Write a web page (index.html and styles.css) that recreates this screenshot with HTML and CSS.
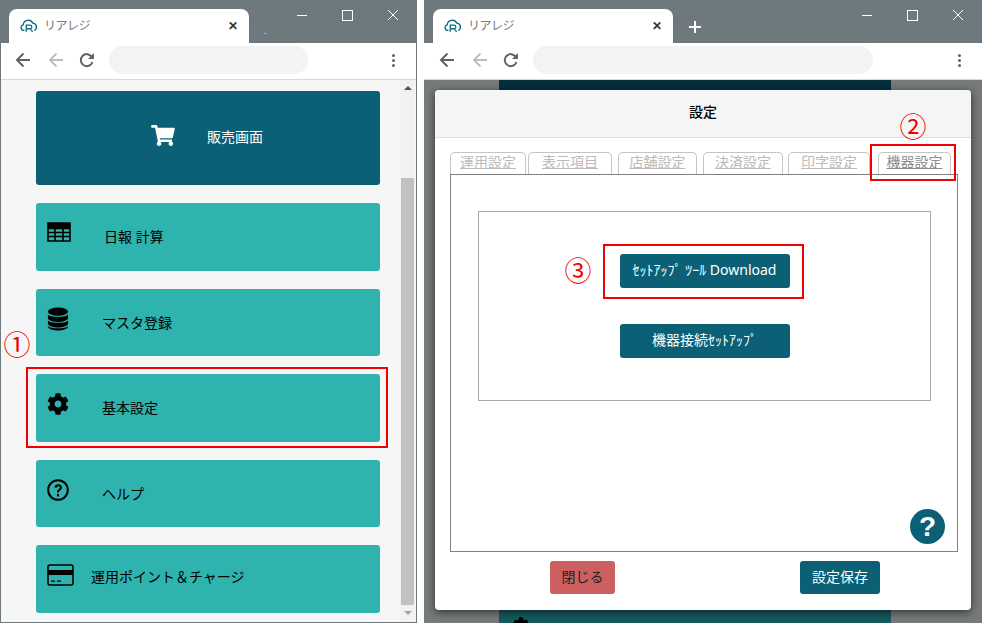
FILE: index.html
```html
<!DOCTYPE html>
<html lang="ja">
<head>
    <meta charset="UTF-8">
    <meta name="viewport" content="width=device-width, initial-scale=1.0">
    <title>リアレジ</title>
    <link rel="stylesheet" href="styles.css">
</head>
<body>
    <svg class="defs" width="0" height="0">
        <symbol id="logo" viewBox="0 0 20 16">
            <path d="M5 13.5H4.2A3.2 3.2 0 0 1 3.6 7.2 5.6 5.6 0 0 1 14.2 5.4 4.2 4.2 0 0 1 15.6 13.5" fill="none" stroke="#0b6f7f" stroke-width="1.5"/>
            <path d="M7 15V7.5h4a2.2 2.2 0 0 1 .6 4.3L14 15M7 11.6h4" fill="none" stroke="#0b6f7f" stroke-width="1.5"/>
        </symbol>
        <symbol id="back" viewBox="0 0 16 16">
            <path d="M15 8H2.5M8.5 1.5 2 8l6.500 6.500" fill="none" stroke="currentColor" stroke-width="2"/>
        </symbol>
        <symbol id="reload" viewBox="0 0 16 16">
            <path d="M13.500 10a6 6 0 1 1-.7-5.200" fill="none" stroke="currentColor" stroke-width="2"/>
            <path d="M15 1v6H9z" fill="currentColor"/>
        </symbol>
    </svg>

    <!-- 左のウィンドウ -->
    <div class="window window-left">
        <div class="titlebar">
            <div class="tab">
                <svg class="tab-logo"><use href="#logo"/></svg>
                <span class="tab-title">リアレジ</span>
                <span class="tab-close">✕</span>
            </div>
            <span class="tab-dot">.</span>
            <div class="win-controls">
                <span class="win-min"></span>
                <span class="win-max"></span>
                <svg class="win-close" viewBox="0 0 12 12"><path d="M1 1l10 10M11 1 1 11" stroke="#fff" fill="none"/></svg>
            </div>
        </div>
        <div class="toolbar">
            <svg class="nav-icon"><use href="#back"/></svg>
            <svg class="nav-icon nav-forward"><use href="#back"/></svg>
            <svg class="nav-icon nav-reload"><use href="#reload"/></svg>
            <div class="omnibox"></div>
            <div class="kebab"><i></i><i></i><i></i></div>
        </div>
        <div class="page">
            <div class="menu">
                <div class="menu-item menu-sales">
                    <svg class="icon-cart" viewBox="0 0 576 512"><path fill="#fff" d="M528.12 301.319l47.273-208C578.806 78.301 567.391 64 551.99 64H159.208l-9.166-44.81C147.758 8.021 137.93 0 126.529 0H24C10.745 0 0 10.745 0 24v16c0 13.255 10.745 24 24 24h69.883l70.248 343.435C147.325 417.1 136 435.222 136 456c0 30.928 25.072 56 56 56s56-25.072 56-56c0-15.674-6.447-29.835-16.824-40h209.647C430.447 426.165 424 440.326 424 456c0 30.928 25.072 56 56 56s56-25.072 56-56c0-22.172-12.888-41.332-31.579-50.405l5.517-24.276c3.413-15.018-8.002-29.319-23.403-29.319H218.117l-6.545-32h293.145c11.206 0 20.92-7.754 23.403-18.681z"/></svg>
                    <span class="menu-label">販売画面</span>
                </div>
                <div class="menu-item">
                    <svg class="menu-icon icon-table" viewBox="0 0 24 20"><path d="M1 1h22v18H1zM1 6.500h22M1 10.500h22M1 14.500h22M8 6.500V19M16 6.500V19" fill="none" stroke="#000" stroke-width="1.600"/><path d="M1 1h22v5H1z"/></svg>
                    <span class="menu-label label-report">日報 計算</span>
                </div>
                <div class="menu-item">
                    <svg class="menu-icon icon-db" viewBox="0 0 24 26"><ellipse cx="12" cy="5" rx="11" ry="4.500"/><path d="M1 8c2 3.500 20 3.500 22 0v4.500c-2 5-20 5-22 0zM1 14.500c2 3.500 20 3.500 22 0v4c-2 5-20 5-22 0zM1 20.500c2 3.500 20 3.500 22 0v1c-2 5.500-20 5.500-22 0z"/></svg>
                    <span class="menu-label">マスタ登録</span>
                </div>
                <div class="menu-item">
                    <svg class="menu-icon" viewBox="0 0 512 512"><path d="M487.4 315.7l-42.6-24.6c4.3-23.2 4.3-47 0-70.2l42.6-24.6c4.9-2.8 7.1-8.6 5.5-14-11.1-35.6-30-67.8-54.7-94.6-3.8-4.1-10-5.1-14.8-2.3L380.8 110c-17.9-15.4-38.5-27.3-60.8-35.1V25.8c0-5.6-3.9-10.5-9.4-11.7-36.7-8.2-74.3-7.8-109.2 0-5.5 1.2-9.4 6.1-9.4 11.7V75c-22.2 7.9-42.8 19.8-60.8 35.1L88.7 85.500c-4.9-2.8-11-1.9-14.8 2.3-24.7 26.7-43.6 58.9-54.7 94.6-1.7 5.4.6 11.2 5.500 14L67.3 221c-4.3 23.2-4.3 47 0 70.2l-42.6 24.6c-4.9 2.8-7.1 8.6-5.500 14 11.1 35.6 30 67.8 54.7 94.6 3.8 4.1 10 5.1 14.8 2.3l42.6-24.6c17.9 15.4 38.5 27.3 60.8 35.1v49.2c0 5.6 3.9 10.5 9.4 11.7 36.7 8.2 74.3 7.8 109.2 0 5.500-1.2 9.4-6.1 9.4-11.7v-49.2c22.2-7.9 42.8-19.8 60.8-35.1l42.6 24.6c4.9 2.8 11 1.9 14.8-2.3 24.7-26.7 43.6-58.9 54.7-94.6 1.500-5.500-.7-11.3-5.6-14.1zM256 336c-44.1 0-80-35.9-80-80s35.9-80 80-80 80 35.9 80 80-35.9 80-80 80z"/></svg>
                    <span class="menu-label">基本設定</span>
                </div>
                <div class="menu-item">
                    <svg class="menu-icon" viewBox="0 0 22 22"><circle cx="11" cy="11" r="9.800" fill="none" stroke="#000" stroke-width="2"/><path d="M7.500 8.500c0-4.500 7.500-4.500 7.500 0 0 2.800-3 2.600-3 5H10c0-3.400 2.700-3.200 2.700-5 0-1.800-3-1.800-3 .3zM10 15h2v2.500h-2z"/></svg>
                    <span class="menu-label">ヘルプ</span>
                </div>
                <div class="menu-item">
                    <svg class="menu-icon icon-card" viewBox="0 0 27 22"><rect x="1" y="1" width="25" height="20" rx="2" fill="none" stroke="#000" stroke-width="1.600"/><path d="M1 6h25v5H1zM4 16.500h4v1.300H4zM10 16.500h4v1.300h-4z"/></svg>
                    <span class="menu-label label-charge">運用ポイント＆チャージ</span>
                </div>
            </div>
            <div class="scrollbar">
                <span class="arrow-up"></span>
                <span class="scroll-thumb"></span>
                <span class="arrow-down"></span>
            </div>
        </div>
    </div>

    <!-- 右のウィンドウ -->
    <div class="window window-right">
        <div class="titlebar">
            <div class="tab">
                <svg class="tab-logo"><use href="#logo"/></svg>
                <span class="tab-title">リアレジ</span>
                <span class="tab-close">✕</span>
            </div>
            <svg class="tab-new" viewBox="0 0 12 12"><path d="M6 0v12M0 6h12" stroke="#fff" stroke-width="2"/></svg>
            <div class="win-controls">
                <span class="win-min"></span>
                <span class="win-max"></span>
                <svg class="win-close" viewBox="0 0 12 12"><path d="M1 1l10 10M11 1 1 11" stroke="#fff" fill="none"/></svg>
            </div>
        </div>
        <div class="toolbar">
            <svg class="nav-icon"><use href="#back"/></svg>
            <svg class="nav-icon nav-forward"><use href="#back"/></svg>
            <svg class="nav-icon nav-reload"><use href="#reload"/></svg>
            <div class="omnibox"></div>
            <div class="kebab"><i></i><i></i><i></i></div>
        </div>
        <div class="page page-dim">
            <div class="behind-top"></div>
            <div class="behind-bottom">
                <svg class="behind-gear" viewBox="0 0 512 512"><path d="M487.4 315.7l-42.6-24.6c4.3-23.2 4.3-47 0-70.2l42.6-24.6c4.9-2.8 7.1-8.6 5.500-14-11.1-35.6-30-67.8-54.7-94.6-3.8-4.1-10-5.1-14.8-2.3L380.8 110c-17.9-15.4-38.5-27.3-60.8-35.1V25.8c0-5.6-3.9-10.5-9.4-11.7-36.7-8.2-74.3-7.8-109.2 0-5.500 1.2-9.4 6.1-9.4 11.7V75c-22.2 7.9-42.8 19.8-60.8 35.1L88.7 85.500c-4.9-2.8-11-1.9-14.8 2.3-24.7 26.7-43.6 58.9-54.7 94.6-1.7 5.4.6 11.2 5.500 14L67.3 221c-4.3 23.2-4.3 47 0 70.2z"/></svg>
            </div>
            <div class="modal">
                <div class="modal-header">設定</div>
                <div class="modal-body">
                    <div class="tabs">
                        <a class="set-tab tab-a">運用設定</a>
                        <a class="set-tab tab-b">表示項目</a>
                        <a class="set-tab tab-c">店舗設定</a>
                        <a class="set-tab tab-d">決済設定</a>
                        <a class="set-tab tab-e">印字設定</a>
                        <a class="set-tab tab-f set-tab-active">機器設定</a>
                    </div>
                    <div class="panel">
                        <div class="device-box">
                            <button type="button" class="btn-dark btn-setup">ｾｯﾄｱｯﾌﾟ ﾂｰﾙ Download</button>
                            <button type="button" class="btn-dark btn-setup">機器接続ｾｯﾄｱｯﾌﾟ</button>
                        </div>
                        <span class="help-round">?</span>
                    </div>
                    <div class="modal-footer">
                        <button type="button" class="btn-close">閉じる</button>
                        <button type="button" class="btn-dark btn-save">設定保存</button>
                    </div>
                </div>
            </div>
        </div>
    </div>

    <!-- 説明用の赤枠と番号 -->
    <div class="mark mark-1"></div>
    <div class="mark mark-2"></div>
    <div class="mark mark-3"></div>
    <span class="num num-1">①</span>
    <span class="num num-2">②</span>
    <span class="num num-3">③</span>
</body>
</html>
```

FILE: styles.css
```css
body {
    margin: 0;
    width: 982px;
    height: 623px;
    display: flex;
    justify-content: space-between;
    position: relative;
    overflow: hidden;
    background-color: #FFFFFF;
    color: #000000;
    font-family: "Noto Sans", "Noto Sans CJK JP", sans-serif;
    font-size: 14px;
}
.defs {
    position: absolute;
}
.window {
    display: flex;
    flex-direction: column;
    box-sizing: border-box;
    height: 623px;
}
.window-left {
    width: 417px;
    border: 1px solid #6d797c;
    border-top: 0;
}
.window-right {
    width: 558px;
}

/* タイトルバー */
.titlebar {
    height: 43px;
    flex: none;
    display: flex;
    align-items: flex-end;
    background-color: #6d797c;
    color: #FFFFFF;
}
.tab {
    width: 240px;
    height: 34px;
    box-sizing: border-box;
    display: flex;
    align-items: center;
    padding: 0 9px 2px 11px;
    background-color: #FFFFFF;
    border-radius: 8px 8px 0 0;
}
.window-left .tab {
    margin-left: 8px;
}
.window-right .tab {
    margin-left: 9px;
}
.tab-logo {
    width: 18px;
    height: 15px;
    flex: none;
}
.tab-title {
    margin-left: 6px;
    flex: 1;
    font-size: 12px;
    letter-spacing: -0.5px;
    color: #777777;
}
.tab-close {
    width: 14px;
    color: #333333;
    font-size: 12px;
    font-weight: bold;
    text-align: center;
}
.tab-dot {
    margin: 0 0 8px 15px;
    font-size: 9px;
    line-height: 9px;
}
.tab-new {
    width: 12px;
    height: 12px;
    margin: 0 0 10px 16px;
}
.win-controls {
    margin-left: auto;
    align-self: flex-start;
    display: flex;
    align-items: center;
    height: 30px;
}
.win-min {
    width: 10px;
    height: 1px;
    background-color: #FFFFFF;
}
.win-max {
    width: 9px;
    height: 9px;
    margin-left: 35px;
    border: 1px solid #FFFFFF;
}
.win-close {
    width: 12px;
    height: 12px;
    margin: 0 17px 0 34px;
}
.window-right .win-close {
    margin-right: 18px;
}

/* ツールバー */
.toolbar {
    height: 37px;
    flex: none;
    box-sizing: border-box;
    display: flex;
    align-items: center;
    padding: 0 0 2px 14px;
    background-color: #FFFFFF;
    border-bottom: 1px solid #d6d8da;
}
.window-right .toolbar {
    padding-left: 15px;
}
.nav-icon {
    width: 16px;
    height: 16px;
    flex: none;
    color: #5f6368;
}
.nav-forward {
    margin-left: 17px;
    color: #bcbec1;
}
.nav-reload {
    margin-left: 15px;
}
.omnibox {
    width: 199px;
    height: 28px;
    margin-left: 14px;
    background-color: #f1f3f4;
    border-radius: 14px;
}
.window-right .omnibox {
    width: 340px;
    margin-left: 14px;
}
.window-right .nav-reload {
    margin-left: 15px;
}
.kebab {
    margin-left: 84px;
    display: flex;
    flex-direction: column;
    gap: 2px;
}
.window-right .kebab {
    margin-left: 85px;
}
.kebab i {
    width: 3px;
    height: 3px;
    border-radius: 50%;
    background-color: #5f6368;
}

/* 左のメニュー */
.page {
    flex: 1;
    display: flex;
    position: relative;
    background-color: #f6f6f6;
    overflow: hidden;
}
.menu {
    flex: 1;
    display: flex;
    flex-direction: column;
    gap: 18px;
    padding: 11px 20px 0 35px;
}
.menu-item {
    height: 68px;
    display: flex;
    align-items: center;
    padding-left: 66px;
    position: relative;
    background-color: #2eb3ae;
    border-radius: 3px;
}
.menu-item:nth-child(3), .menu-item:nth-child(5) {
    height: 67px;
}
.menu-sales {
    height: 94px;
    padding-left: 115px;
    background-color: #0b6075;
    color: #FFFFFF;
}
.menu-icon {
    position: absolute;
    left: 11px;
    top: 19px;
    width: 22px;
    height: 22px;
}
.icon-table {
    width: 24px;
    height: 20px;
}
.icon-db {
    top: 18px;
    height: 24px;
}
.icon-card {
    width: 27px;
    height: 22px;
}
.icon-cart {
    width: 24px;
    height: 21px;
    margin: -6px 32px 0 0;
}
.menu-label {
    margin-top: -2px;
}
.menu-sales .menu-label {
    margin-top: -4px;
}
.label-report {
    margin-left: 2px;
}
.label-charge {
    margin-left: -11px;
    margin-top: -6px;
}
.scrollbar {
    width: 15px;
    flex: none;
    margin-right: 1px;
    display: flex;
    flex-direction: column;
    align-items: center;
    background-color: #f1f1f1;
}
.arrow-up, .arrow-down {
    width: 0;
    height: 0;
    border-left: 4px solid transparent;
    border-right: 4px solid transparent;
}
.arrow-up {
    margin-top: 6px;
    border-bottom: 4px solid #505050;
}
.arrow-down {
    margin-top: 6px;
    border-top: 4px solid #a3a3a3;
}
.scroll-thumb {
    width: 13px;
    height: 427px;
    margin-top: 88px;
    background-color: #c1c1c1;
}

/* 右のダイアログ */
.page-dim {
    background-color: #767a7a;
}
.behind-top, .behind-bottom {
    position: absolute;
    left: 75px;
    width: 392px;
}
.behind-top {
    top: 0;
    height: 12px;
    background-color: #052e3b;
}
.behind-bottom {
    bottom: 0;
    height: 14px;
    background-color: #155a5c;
}
.behind-gear {
    position: absolute;
    left: 14px;
    top: 8px;
    width: 16px;
    height: 16px;
}
.modal {
    position: absolute;
    left: 11px;
    top: 10px;
    width: 536px;
    height: 520px;
    background-color: #FFFFFF;
    border-radius: 4px;
    box-shadow: 0 2px 8px rgba(0, 0, 0, 0.6);
    overflow: hidden;
}
.modal-header {
    height: 48px;
    box-sizing: border-box;
    padding-top: 9px;
    background-color: #f5f5f5;
    border-bottom: 1px solid #dddddd;
    text-align: center;
    font-weight: 500;
    line-height: 26px;
}
.modal-body {
    padding: 14px 13px 0 15px;
}
.tabs {
    display: flex;
    height: 22px;
}
.set-tab {
    box-sizing: border-box;
    height: 22px;
    flex: none;
    border: 1px solid #c4c4c4;
    border-bottom: 0;
    border-radius: 5px 5px 0 0;
    color: #bbbbbb;
    text-align: center;
    text-decoration: underline;
    line-height: 18px;
}
.set-tab-active {
    color: #8d8d8d;
}
.tab-a { width: 76px; }
.tab-b { width: 84px; margin-left: 2px; }
.tab-c { width: 79px; margin-left: 6px; }
.tab-d { width: 80px; margin-left: 6px; }
.tab-e { width: 82px; margin-left: 5px; }
.tab-f { width: 73px; margin-left: 8px; }
.panel {
    height: 378px;
    box-sizing: border-box;
    padding: 36px 26px 0 27px;
    position: relative;
    border: 1px solid #808080;
}
.device-box {
    height: 190px;
    display: flex;
    flex-direction: column;
    align-items: center;
    gap: 36px;
    padding-top: 42px;
    box-sizing: border-box;
    border: 1px solid #aaaaaa;
}
.btn-dark {
    padding: 0;
    border: 0;
    border-radius: 3px;
    background-color: #0b6075;
    color: #FFFFFF;
    font-family: inherit;
    font-size: 14px;
}
.btn-setup {
    width: 170px;
    height: 34px;
    flex: none;
    padding-bottom: 4px;
}
.help-round {
    position: absolute;
    right: 12px;
    bottom: 7px;
    width: 35px;
    height: 35px;
    border-radius: 50%;
    background-color: #0b6075;
    color: #FFFFFF;
    font-family: "Liberation Sans", sans-serif;
    font-size: 28px;
    font-weight: bold;
    line-height: 35px;
    text-align: center;
}
.modal-footer {
    display: flex;
    padding: 9px 0 0 100px;
}
.btn-close {
    width: 65px;
    height: 33px;
    padding: 0 0 4px;
    border: 0;
    border-radius: 3px;
    background-color: #cc6060;
    color: #222222;
    font-family: inherit;
    font-size: 14px;
}
.btn-save {
    width: 80px;
    height: 33px;
    margin-left: 185px;
    padding-bottom: 4px;
}

/* 説明用の赤枠 */
.mark {
    position: absolute;
    box-sizing: border-box;
    border: 2px solid #f00000;
}
.mark-1 {
    left: 26px;
    top: 367px;
    width: 362px;
    height: 81px;
}
.mark-2 {
    left: 870px;
    top: 144px;
    width: 86px;
    height: 37px;
}
.mark-3 {
    left: 603px;
    top: 244px;
    width: 201px;
    height: 55px;
}
.num {
    position: absolute;
    width: 30px;
    color: #f00000;
    font-family: "Noto Sans CJK JP", sans-serif;
    font-size: 27px;
    line-height: 28px;
    text-align: center;
}
.num-1 {
    left: 2px;
    top: 330px;
}
.num-2 {
    left: 898px;
    top: 112px;
}
.num-3 {
    left: 563px;
    top: 256px;
}
```
